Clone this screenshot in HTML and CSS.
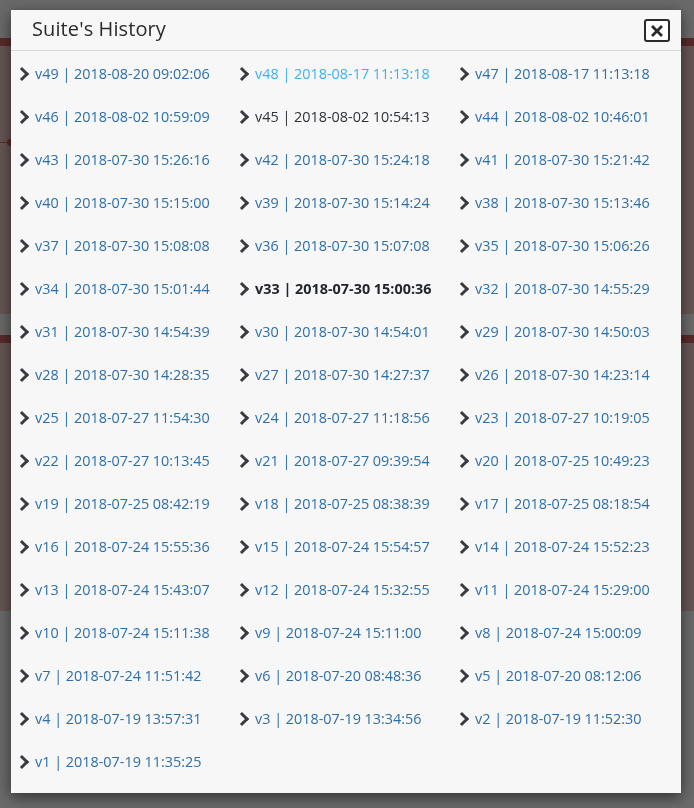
FILE: index.html
```html
<!DOCTYPE html>
<html>
<head>
<meta charset="utf-8">
<title>Suite's History</title>
<link rel="stylesheet" href="styles.css">
</head>
<body>
<div class="page">
  <section class="panel">
    <div class="panel-head"></div>
    <div class="panel-body"><span class="node"></span></div>
  </section>
  <section class="panel">
    <div class="panel-head"></div>
    <div class="panel-body"></div>
  </section>
</div>
<div class="backdrop"></div>
<div class="modal">
  <header class="modal-header">
    <h2 class="modal-title">Suite's History</h2>
    <button class="close" aria-label="Close">
      <svg width="12" height="12" viewBox="0 0 12 12"><path d="M2 2 L10 10 M10 2 L2 10" stroke="#2b2b2b" stroke-width="2.8" stroke-linecap="square"/></svg>
    </button>
  </header>
  <div class="modal-body">
    <ul class="versions">
      <li><a href="#">v49 | 2018-08-20 09:02:06</a></li>
      <li><a class="hover" href="#">v48 | 2018-08-17 11:13:18</a></li>
      <li><a href="#">v47 | 2018-08-17 11:13:18</a></li>
      <li><a href="#">v46 | 2018-08-02 10:59:09</a></li>
      <li><a class="visited" href="#">v45 | 2018-08-02 10:54:13</a></li>
      <li><a href="#">v44 | 2018-08-02 10:46:01</a></li>
      <li><a href="#">v43 | 2018-07-30 15:26:16</a></li>
      <li><a href="#">v42 | 2018-07-30 15:24:18</a></li>
      <li><a href="#">v41 | 2018-07-30 15:21:42</a></li>
      <li><a href="#">v40 | 2018-07-30 15:15:00</a></li>
      <li><a href="#">v39 | 2018-07-30 15:14:24</a></li>
      <li><a href="#">v38 | 2018-07-30 15:13:46</a></li>
      <li><a href="#">v37 | 2018-07-30 15:08:08</a></li>
      <li><a href="#">v36 | 2018-07-30 15:07:08</a></li>
      <li><a href="#">v35 | 2018-07-30 15:06:26</a></li>
      <li><a href="#">v34 | 2018-07-30 15:01:44</a></li>
      <li><a class="current" href="#">v33 | 2018-07-30 15:00:36</a></li>
      <li><a href="#">v32 | 2018-07-30 14:55:29</a></li>
      <li><a href="#">v31 | 2018-07-30 14:54:39</a></li>
      <li><a href="#">v30 | 2018-07-30 14:54:01</a></li>
      <li><a href="#">v29 | 2018-07-30 14:50:03</a></li>
      <li><a href="#">v28 | 2018-07-30 14:28:35</a></li>
      <li><a href="#">v27 | 2018-07-30 14:27:37</a></li>
      <li><a href="#">v26 | 2018-07-30 14:23:14</a></li>
      <li><a href="#">v25 | 2018-07-27 11:54:30</a></li>
      <li><a href="#">v24 | 2018-07-27 11:18:56</a></li>
      <li><a href="#">v23 | 2018-07-27 10:19:05</a></li>
      <li><a href="#">v22 | 2018-07-27 10:13:45</a></li>
      <li><a href="#">v21 | 2018-07-27 09:39:54</a></li>
      <li><a href="#">v20 | 2018-07-25 10:49:23</a></li>
      <li><a href="#">v19 | 2018-07-25 08:42:19</a></li>
      <li><a href="#">v18 | 2018-07-25 08:38:39</a></li>
      <li><a href="#">v17 | 2018-07-25 08:18:54</a></li>
      <li><a href="#">v16 | 2018-07-24 15:55:36</a></li>
      <li><a href="#">v15 | 2018-07-24 15:54:57</a></li>
      <li><a href="#">v14 | 2018-07-24 15:52:23</a></li>
      <li><a href="#">v13 | 2018-07-24 15:43:07</a></li>
      <li><a href="#">v12 | 2018-07-24 15:32:55</a></li>
      <li><a href="#">v11 | 2018-07-24 15:29:00</a></li>
      <li><a href="#">v10 | 2018-07-24 15:11:38</a></li>
      <li><a href="#">v9 | 2018-07-24 15:11:00</a></li>
      <li><a href="#">v8 | 2018-07-24 15:00:09</a></li>
      <li><a href="#">v7 | 2018-07-24 11:51:42</a></li>
      <li><a href="#">v6 | 2018-07-20 08:48:36</a></li>
      <li><a href="#">v5 | 2018-07-20 08:12:06</a></li>
      <li><a href="#">v4 | 2018-07-19 13:57:31</a></li>
      <li><a href="#">v3 | 2018-07-19 13:34:56</a></li>
      <li><a href="#">v2 | 2018-07-19 11:52:30</a></li>
      <li><a href="#">v1 | 2018-07-19 11:35:25</a></li>
    </ul>
  </div>
</div>
</body>
</html>
```

FILE: styles.css
```css
* { box-sizing: border-box; }
html, body { margin: 0; padding: 0; }
body {
  width: 694px;
  height: 808px;
  overflow: hidden;
  background: #6d6d6d;
  font-family: "Open Sans", "Liberation Sans", sans-serif;
}
.page {
  padding-top: 38px;
  display: flex;
  flex-direction: column;
  gap: 21px;
}
.panel { display: flex; flex-direction: column; }
.panel-head { height: 8px; background: #5a2b2b; }
.panel-body { height: 268px; background: #6a5757; position: relative; }
.node {
  position: absolute;
  left: 0;
  top: 93px;
  width: 12px;
  height: 6px;
  border-top: 1px solid #5a2b2b;
  margin-top: 3px;
}
.node::after {
  content: "";
  position: absolute;
  right: -2px;
  top: -4px;
  width: 7px;
  height: 7px;
  border-radius: 50%;
  background: #5a2b2b;
}
.backdrop {
  position: fixed;
  inset: 0;
  background: rgba(0,0,0,0.02);
}
.modal {
  position: absolute;
  left: 11px;
  top: 10px;
  width: 670px;
  height: 783px;
  background: #f7f7f7;
  box-shadow: 0 4px 14px rgba(0,0,0,0.55);
  display: flex;
  flex-direction: column;
}
.modal-header {
  height: 41px;
  border-bottom: 1px solid #d9d9d9;
  display: flex;
  align-items: center;
  justify-content: space-between;
  padding: 0 11px 0 21px;
}
.modal-title {
  margin: 0;
  font-size: 20px;
  font-weight: 400;
  color: #2b2b2b;
  letter-spacing: 0.1px;
  line-height: 1;
  margin-top: -2px;
}
.close {
  width: 26px;
  height: 23px;
  border: 2px solid #2b2b2b;
  border-radius: 3px;
  background: #fff;
  padding: 0;
  display: flex;
  align-items: center;
  justify-content: center;
  margin-top: 1px;
}
.close svg { display: block; }
.modal-body {
  padding: 1px 0 0 0;
}
.versions {
  list-style: none;
  margin: 0;
  padding: 0;
  display: grid;
  grid-template-columns: repeat(3, 220px);
  grid-auto-rows: 43px;
}
.versions li {
  display: flex;
  align-items: center;
  padding-left: 5px;
}
.versions li::before {
  content: "";
  flex: none;
  width: 7px;
  height: 7px;
  border-top: 3px solid #383c40;
  border-right: 3px solid #383c40;
  transform: rotate(45deg);
  margin-left: 1px;
  margin-right: 8px;
  margin-top: 1px;
}
.versions a {
  font-size: 14.4px;
  color: #2e6fa7;
  text-decoration: none;
  white-space: nowrap;
}
.versions a.hover { color: #3fb1ee; }
.versions a.visited { color: #2e3338; }
.versions a.current { color: #23272b; font-weight: 700; }
```
